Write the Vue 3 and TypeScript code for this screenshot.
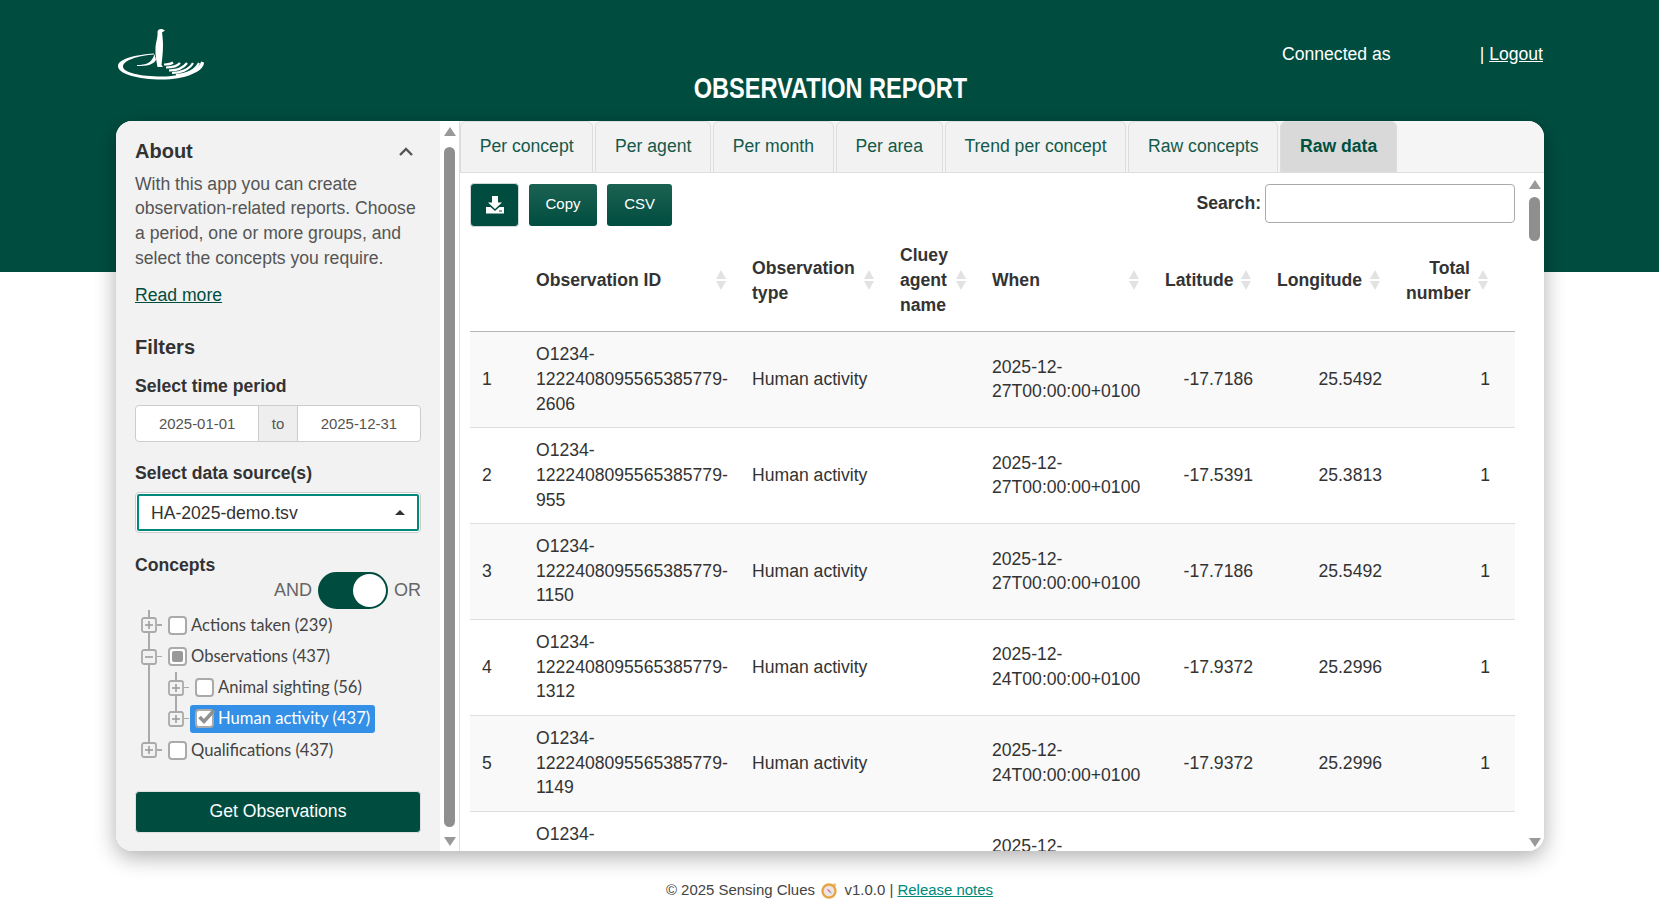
<script setup lang="ts">
interface TreeNode { label: string; level: number; open?: boolean; state: 'none' | 'partial' | 'checked'; selected?: boolean }
interface Row { id: string[]; when: string; lat: string; lon: string }

const tabs: string[] = ['Per concept', 'Per agent', 'Per month', 'Per area', 'Trend per concept', 'Raw concepts', 'Raw data']

const tree: TreeNode[] = [
  { label: 'Actions taken (239)', level: 0, state: 'none' },
  { label: 'Observations (437)', level: 0, open: true, state: 'partial' },
  { label: 'Animal sighting (56)', level: 1, state: 'none' },
  { label: 'Human activity (437)', level: 1, state: 'checked', selected: true },
  { label: 'Qualifications (437)', level: 0, state: 'none' },
]

const rows: Row[] = [
  { id: ['O1234-', '1222408095565385779-', '2606'], when: '2025-12-27T00:00:00+0100', lat: '-17.7186', lon: '25.5492' },
  { id: ['O1234-', '1222408095565385779-', '955'], when: '2025-12-27T00:00:00+0100', lat: '-17.5391', lon: '25.3813' },
  { id: ['O1234-', '1222408095565385779-', '1150'], when: '2025-12-27T00:00:00+0100', lat: '-17.7186', lon: '25.5492' },
  { id: ['O1234-', '1222408095565385779-', '1312'], when: '2025-12-24T00:00:00+0100', lat: '-17.9372', lon: '25.2996' },
  { id: ['O1234-', '1222408095565385779-', '1149'], when: '2025-12-24T00:00:00+0100', lat: '-17.9372', lon: '25.2996' },
  { id: ['O1234-', '1222408095565385779-', '1148'], when: '2025-12-24T00:00:00+0100', lat: '-17.9372', lon: '25.2996' },
]

const columns: { label: string; cls: string }[] = [
  { label: 'Observation ID', cls: 'sort' },
  { label: 'Observation type', cls: 'sort' },
  { label: 'Cluey agent name', cls: 'sort' },
  { label: 'When', cls: 'sort' },
  { label: 'Latitude', cls: 'sort num' },
  { label: 'Longitude', cls: 'sort num' },
  { label: 'Total number', cls: 'sort num' },
]
</script>

<template>
  <div class="page">
    <header class="top">
      <svg class="logo" viewBox="0 0 90 54" width="90" height="54" aria-label="Sensing Clues logo">
        <path fill="#fff" d="M38 26.500C20 27.500 2 32 2 39C2 47 22 52.500 46 52.500C68 52.500 88 45 88 35.500L85 34.500C84 42 66 49.500 46 49.500C24 49.500 7 45.500 7 39.500C7 33.500 22 28.500 38 27.500Z" />
        <path fill="#fff" d="M41.500 5C41.500 2.500 44 1.500 46 2L49 3.500L46 5.500C46.500 9 47 13 47 18C47 26 46 33 45.500 38L47 40L41.500 40C40.500 34 39 28 39.500 20C40 14 42 10 41.500 5Z" />
        <path fill="#fff" d="M21 38C30 38 36 36 38.500 27L40 33C37 38 31 39 21 39Z" />
        <g fill="none" stroke="#fff" stroke-width="2.200">
          <path d="M48 37.500C52 37.500 55 37 57 35.500" />
          <path d="M50 40.500C56 40.500 61 39.500 64 36" />
          <path d="M53 43.500C60 43.500 67 41.500 71 36" />
          <path d="M56 46C64 46 73 43 77 36" />
          <path d="M60 48C69 47.500 79 44 83 36" />
        </g>
      </svg>
      <h1 class="title">OBSERVATION REPORT</h1>
      <div class="user">
        <span>Connected as</span>
        <span>| <a href="#" class="logout">Logout</a></span>
      </div>
    </header>

    <main class="card">
      <aside class="sidebar">
        <div class="about-head">
          <h2>About</h2>
          <svg width="14" height="9" viewBox="0 0 14 9"><path d="M1 8L7 2L13 8" fill="none" stroke="#555" stroke-width="2.400" /></svg>
        </div>
        <p class="about-text">With this app you can create observation-related reports. Choose a period, one or more groups, and select the concepts you require.</p>
        <a href="#" class="read-more">Read more</a>

        <h2 class="filters">Filters</h2>
        <label class="lbl lbl-time">Select time period</label>
        <div class="dates">
          <span class="date">2025-01-01</span>
          <span class="to">to</span>
          <span class="date">2025-12-31</span>
        </div>
        <label class="lbl lbl-source">Select data source(s)</label>
        <div class="select">
          <div class="select-inner">
            <span>HA-2025-demo.tsv</span>
            <i class="caret"></i>
          </div>
        </div>
        <label class="lbl lbl-concepts">Concepts</label>
        <div class="switch-row">
          <span>AND</span>
          <span class="switch"><i></i></span>
          <span>OR</span>
        </div>

        <div class="tree">
          <i class="vline vline-a"></i>
          <i class="vline vline-b"></i>
          <div v-for="n in tree" :key="n.label" class="node" :class="'lv' + n.level">
            <span class="exp">
              <svg width="16" height="16" viewBox="0 0 16 16">
                <rect x="1" y="1" width="14" height="14" rx="2" fill="#f2f2f2" stroke="#aaa" stroke-width="1.800" />
                <path d="M4 8H12" stroke="#999" stroke-width="1.500" />
                <path v-if="!n.open" d="M8 4V12" stroke="#999" stroke-width="1.500" />
              </svg>
              <i class="stub"></i>
            </span>
            <span class="anchor" :class="{ selected: n.selected }">
              <span class="check">
                <i v-if="n.state === 'partial'" class="partial"></i>
                <svg v-if="n.state === 'checked'" class="tick" width="20" height="18" viewBox="0 0 20 18"><path d="M3.500 9L8 13.500L18 2.500" fill="none" stroke="#919191" stroke-width="3.600" /></svg>
              </span>
              <span>{{ n.label }}</span>
            </span>
          </div>
        </div>

        <button class="get">Get Observations</button>
      </aside>

      <div class="vbar side-bar">
        <i class="arr up"></i>
        <i class="thumb side-thumb"></i>
        <i class="arr down"></i>
      </div>

      <section class="main">
        <nav class="tabs">
          <a v-for="t in tabs" :key="t" class="tab" :class="{ active: t === 'Raw data' }">{{ t }}</a>
        </nav>
        <div class="pane">
          <div class="content">
            <div class="toolbar">
              <button class="btn-dl" aria-label="Download">
                <svg width="20" height="20" viewBox="0 0 20 20">
                  <path fill="#fff" d="M7 1H13V7.500H17L10 14L3 7.500H7Z" />
                  <path fill="#fff" d="M1 12H5.500L10 16L14.500 12H19V18.500H1Z" />
                  <rect x="14" y="15.500" width="3" height="1" fill="#00503f" />
                </svg>
              </button>
              <button class="btn">Copy</button>
              <button class="btn btn-csv">CSV</button>
              <label class="search">Search: <input type="text" /></label>
            </div>
            <table class="grid">
              <colgroup>
                <col class="c0" /><col class="c1" /><col class="c2" /><col class="c3" /><col class="c4" /><col class="c5" /><col class="c6" /><col class="c7" /><col class="c8" />
              </colgroup>
              <thead>
                <tr>
                  <th></th>
                  <th v-for="c in columns" :key="c.label" :class="c.cls">{{ c.label }}</th>
                  <th></th>
                </tr>
              </thead>
              <tbody>
                <tr v-for="(r, i) in rows" :key="i">
                  <td>{{ i + 1 }}</td>
                  <td class="idc"><template v-for="l in r.id" :key="l">{{ l }}<br /></template></td>
                  <td>Human activity</td>
                  <td></td>
                  <td>{{ r.when }}</td>
                  <td class="num">{{ r.lat }}</td>
                  <td class="num">{{ r.lon }}</td>
                  <td class="num">1</td>
                  <td></td>
                </tr>
              </tbody>
            </table>
          </div>
          <div class="vbar main-bar">
            <i class="arr up"></i>
            <i class="thumb main-thumb"></i>
            <i class="spacer"></i>
            <i class="arr down"></i>
          </div>
        </div>
      </section>
    </main>

    <footer class="foot">
      <span>© 2025 Sensing Clues</span>
      <svg class="compass" width="17" height="17" viewBox="0 0 17 17">
        <circle cx="13.500" cy="3" r="1.800" fill="#f2c572" />
        <circle cx="8" cy="9" r="6.500" fill="#ece6e6" stroke="#e8a548" stroke-width="2.400" />
        <path d="M5.500 6.500L9.500 9L8 10Z" fill="#e0506e" />
        <path d="M8 10L9.500 9L11 12Z" fill="#9aa0b0" />
      </svg>
      <span>v1.0.0 | <a href="#" class="notes">Release notes</a></span>
    </footer>
  </div>
</template>

<style>
html, body { margin: 0; padding: 0; }
</style>

<style scoped>
.page {
  width: 1659px;
  height: 908px;
  overflow: hidden;
  font-family: "Liberation Sans", Arial, sans-serif;
  font-size: 17.6px;
  line-height: 1.4;
  color: #333;
  background: linear-gradient(#004d40 0, #004d40 271.500px, #fff 271.500px);
  box-sizing: border-box;
}
.top {
  height: 121px;
  width: 1428px;
  margin-left: 116px;
  display: grid;
  grid-template-columns: 1fr auto 1fr;
  color: #fff;
}
.logo { margin: 27px 0 0 0; }
.title {
  margin: 71px 0 0;
  font-size: 30px;
  line-height: 34px;
  font-weight: 700;
  height: 34px;
  white-space: nowrap;
  transform: scaleX(0.785);
  width: 273px;
  display: flex;
  justify-content: center;
}
.user {
  justify-self: end;
  width: 261px;
  margin-right: 1px;
  display: flex;
  justify-content: space-between;
  padding-top: 42px;
  height: 25px;
}
.logout { color: #fff; text-decoration: underline; }

.card {
  width: 1428px;
  height: 730px;
  margin-left: 116px;
  display: flex;
  background: #fff;
  border-radius: 16px;
  overflow: hidden;
  box-shadow: 0 6px 22px rgba(0, 0, 0, 0.32);
}

.sidebar {
  width: 324px;
  flex: none;
  box-sizing: border-box;
  padding: 19px 19px 0 19px;
  background: #f2f2f2;
  display: flex;
  flex-direction: column;
  color: #555;
}
.sidebar h2 {
  margin: 0;
  font-size: 20px;
  line-height: 22px;
  font-weight: 700;
  color: #333;
}
.about-head { display: flex; justify-content: space-between; align-items: center; padding-right: 8px; }
.about-text { margin: 9.700px 0 0; }
.read-more { margin-top: 12.400px; color: #004d40; text-decoration: underline; align-self: flex-start; }
.sidebar .filters { margin-top: 28.700px; }
.lbl { font-weight: 700; color: #333; display: block; }
.lbl-time { margin-top: 15.700px; }
.lbl-source { margin-top: 18.700px; }
.lbl-concepts { margin-top: 19.700px; }
.dates {
  margin-top: 6.700px;
  height: 37px;
  display: flex;
  box-sizing: border-box;
  border: 1px solid #ccc;
  border-radius: 4px;
  overflow: hidden;
  font-size: 14.960px;
  line-height: 35px;
  text-align: center;
  background: #fff;
  color: #555;
}
.date { flex: 1; }
.to { width: 39.500px; flex: none; box-sizing: border-box; background: #eee; border-left: 1px solid #ccc; border-right: 1px solid #ccc; }
.select {
  margin-top: 6.700px;
  height: 41px;
  box-sizing: border-box;
  border: 1px solid #ccc;
  border-radius: 4px;
  padding: 1px;
  background: #fff;
}
.select-inner {
  height: 100%;
  box-sizing: border-box;
  border: 2px solid #00897b;
  border-radius: 2px;
  padding: 1px 12px 0 12px;
  display: flex;
  align-items: center;
  justify-content: space-between;
  color: #333;
  background: #fff;
}
.caret { width: 0; height: 0; border-left: 5px solid transparent; border-right: 5px solid transparent; border-bottom: 5px solid #333; }
.switch-row {
  margin-top: -5.300px;
  height: 37px;
  display: flex;
  align-items: center;
  justify-content: flex-end;
  gap: 6px;
  font-size: 18px;
  color: #666;
}
.switch {
  width: 70px;
  height: 37px;
  box-sizing: border-box;
  border-radius: 19px;
  border: 2px solid #004d40;
  background: #004d40;
  display: flex;
  justify-content: flex-end;
}
.switch i { width: 33px; height: 33px; border-radius: 50%; background: #fff; }

.tree {
  position: relative;
  margin-top: 0.900px;
  height: 156px;
  font-family: Lato, "Noto Sans", sans-serif;
  font-size: 16.600px;
  color: #444;
}
.vline { position: absolute; width: 1.500px; background: #aaa; }
.vline-a { left: 13px; top: 0; height: 136px; }
.vline-b { left: 40px; top: 62px; height: 47px; }
.node { position: relative; height: 31.200px; display: flex; align-items: center; padding-left: 6px; }
.node.lv1 { padding-left: 33px; }
.exp { position: relative; width: 16px; height: 16px; flex: none; margin-right: 6px; display: block; }
.exp svg { display: block; position: relative; }
.stub { position: absolute; left: 16px; top: 7px; width: 5px; height: 1.500px; background: #aaa; }
.anchor { display: flex; align-items: center; gap: 4px; height: 28px; padding: 0 5px 0 5px; border-radius: 3px; white-space: nowrap; }
.anchor.selected { background: #3390e6; color: #fff; }
.check {
  position: relative;
  width: 19px;
  height: 19px;
  box-sizing: border-box;
  border: 2px solid #aaa;
  border-radius: 4px;
  background: #fff;
  flex: none;
  display: flex;
  align-items: center;
  justify-content: center;
}
.partial { width: 11px; height: 11px; background: #999; border-radius: 2px; }
.tick { position: absolute; left: -1px; top: -3px; }

.get {
  margin-top: 25.300px;
  height: 42px;
  border: 1px solid #e0e0e0;
  border-radius: 4px;
  background: #004d40;
  color: #fff;
  font: inherit;
  font-family: "Liberation Sans", Arial, sans-serif;
  padding: 0 0 2px;
}

.vbar { display: flex; flex-direction: column; align-items: center; flex: none; background: #fff; }
.side-bar { width: 19px; border-right: 1px solid #ddd; padding: 6px 0 5px; gap: 10.500px; }
.arr { display: block; width: 0; height: 0; border-left: 6.500px solid transparent; border-right: 6.500px solid transparent; flex: none; }
.arr.up { border-bottom: 9px solid #999; }
.arr.down { border-top: 9px solid #999; }
.thumb { display: block; width: 11px; border-radius: 6px; background: #8f8f8f; flex: none; }
.side-thumb { flex: 1; }
.main-thumb { height: 44px; }
.spacer { flex: 1; }

.main { flex: 1; min-width: 0; display: flex; flex-direction: column; }
.tabs {
  height: 52px;
  flex: none;
  box-sizing: border-box;
  border-bottom: 1px solid #ddd;
  background: #f5f5f5;
  display: flex;
  gap: 2.100px;
}
.tab {
  box-sizing: border-box;
  height: 52px;
  padding: 0 18.700px;
  line-height: 49px;
  border: 1px solid #ddd;
  border-radius: 6px 6px 0 0;
  background: #f2f2f2;
  color: #14594a;
  white-space: nowrap;
}
.tab.active { background: #d9d9d9; color: #00503f; font-weight: 700; }
.pane { flex: 1; min-height: 0; display: flex; overflow: hidden; }
.content { width: 1066px; flex: none; box-sizing: border-box; padding: 10px 0 0 10px; overflow: hidden; }
.toolbar { display: flex; align-items: flex-start; height: 45px; }
.btn-dl {
  width: 49px;
  height: 44px;
  margin-right: 10px;
  padding: 0;
  border: 1px solid #cfd8d6;
  border-radius: 4px;
  background: #004d40;
  display: flex;
  align-items: center;
  justify-content: center;
}
.btn {
  width: 68px;
  height: 42px;
  margin: 1px 10px 0 0;
  padding: 0 0 2px;
  border: 0;
  border-radius: 3px;
  background: linear-gradient(#1c6252, #004d40);
  color: #fff;
  font: inherit;
  font-size: 14.960px;
  font-family: "Liberation Sans", Arial, sans-serif;
}
.btn-csv { width: 65px; }
.search {
  margin-left: auto;
  margin-right: 11px;
  margin-top: 1px;
  font-weight: 700;
  display: flex;
  align-items: center;
  gap: 4px;
  height: 39px;
}
.search input {
  width: 250px;
  height: 39px;
  box-sizing: border-box;
  border: 1px solid #aaa;
  border-radius: 4px;
  background: #fff;
  margin: 0;
}
.grid { width: 1045px; table-layout: fixed; border-collapse: collapse; margin-top: 0.500px; }
.c0 { width: 54px; } .c1 { width: 216px; } .c2 { width: 148px; } .c3 { width: 92px; } .c4 { width: 173px; }
.c5 { width: 112px; } .c6 { width: 129px; } .c7 { width: 108px; } .c8 { width: 13px; }
th {
  position: relative;
  text-align: left;
  vertical-align: middle;
  padding: 14.800px 33px 12.800px 12px;
  font-weight: 700;
  line-height: 24.900px;
  border-bottom: 1px solid #b5b5b5;
}
th.num { text-align: right; padding-right: 32px; }
th.sort::before, th.sort::after {
  content: "";
  position: absolute;
  right: 14.500px;
  top: 50%;
  width: 0;
  height: 0;
  border-left: 5px solid transparent;
  border-right: 5px solid transparent;
}
th.sort::before { margin-top: -10px; border-bottom: 9px solid #e2e2e2; }
th.sort::after { margin-top: 1px; border-top: 9px solid #e2e2e2; }
th:first-child, th:last-child { padding: 0; }
td {
  padding: 10.540px 12px;
  border-bottom: 1px solid #ddd;
  vertical-align: middle;
}
td:last-child { padding: 0; }
td.idc { padding-right: 0; white-space: nowrap; }
td.num { text-align: right; }
tbody tr:nth-child(odd) td { background: #f9f9f9; }

.main-bar { width: 19px; padding: 7px 0 4px; margin-left: -1px; }
.main-bar .thumb { margin-top: 8px; }

.foot {
  margin-top: 28px;
  height: 22px;
  display: flex;
  justify-content: center;
  align-items: center;
  gap: 6.300px;
  font-size: 14.960px;
  color: #444;
}
.notes { color: #00897b; text-decoration: underline; }
.compass { display: block; }
</style>
